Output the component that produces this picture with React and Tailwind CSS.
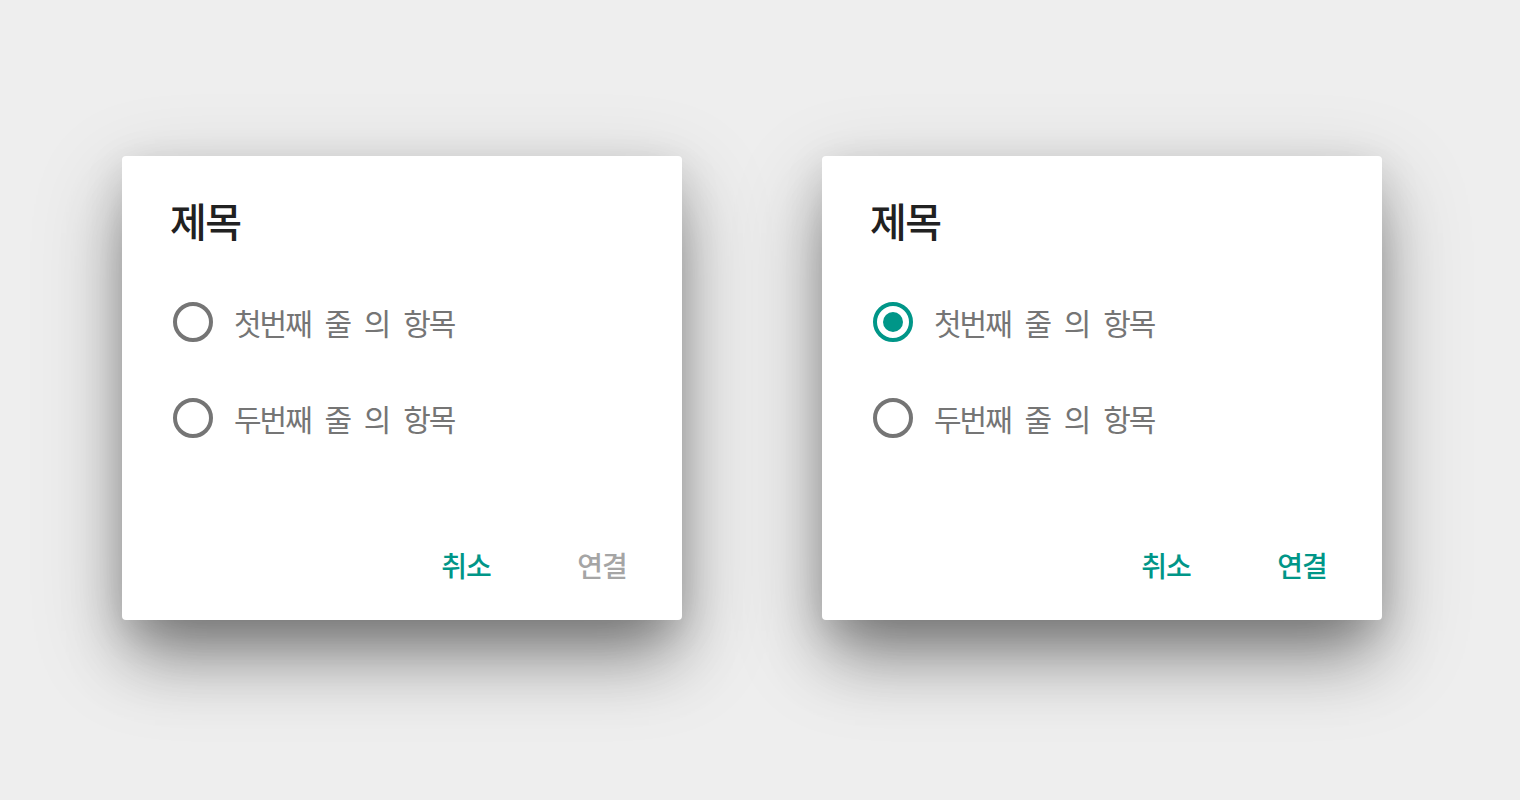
import React from 'react';

const FONT = { fontFamily: '"Noto Sans CJK KR", "Noto Sans", sans-serif' };

// Material-style radio button (drawn at 2x)
const Radio = ({ checked }) => (
  <span
    className={`flex items-center justify-center w-10 h-10 rounded-full border-4 shrink-0 ${checked ? 'border-[#009688]' : 'border-[#757575]'}`}
  >
    {checked && <span className="w-5 h-5 rounded-full bg-[#009688]" />}
  </span>
);

const Dialog = ({ selected }) => {
  const items = ['첫번째 줄 의 항목', '두번째 줄 의 항목'];

  return (
    <div className="w-[560px] h-[464px] bg-white rounded-[4px] flex flex-col shadow-[0_44px_60px_-12px_rgba(0,0,0,0.38),0_30px_90px_10px_rgba(0,0,0,0.14),0_10px_40px_0_rgba(0,0,0,0.12)]">
      {/* Title */}
      <div className="pl-[48px] pt-[38px] text-[40px] leading-[52px] font-medium text-[#212121] tracking-[-1.5px]">
        제목
      </div>

      {/* Options */}
      <div className="flex flex-col pt-[28px] pl-[51px]">
        {items.map((label, i) => (
          <div key={label} className="flex items-center h-[96px] gap-[21px]">
            <Radio checked={selected === i} />
            <span className="text-[30px] text-[#757575] tracking-[-2px] [word-spacing:9px]">{label}</span>
          </div>
        ))}
      </div>

      {/* Actions */}
      <div className="mt-auto flex justify-end gap-2 pr-4 pb-[19px]">
        <button type="button" className="min-w-[128px] h-[72px] text-[28px] font-medium text-[#009688] tracking-[-1px]">
          취소
        </button>
        <button
          type="button"
          className={`min-w-[128px] h-[72px] text-[28px] font-medium tracking-[-1px] ${selected === null ? 'text-[#a5a5a5]' : 'text-[#009688]'}`}
        >
          연결
        </button>
      </div>
    </div>
  );
};

export default function App() {
  return (
    <div style={FONT} className="w-[1520px] h-[800px] bg-[#eeeeee] flex items-start gap-[140px] pl-[122px] pt-[156px] overflow-hidden">
      <Dialog selected={null} />
      <Dialog selected={0} />
    </div>
  );
}
